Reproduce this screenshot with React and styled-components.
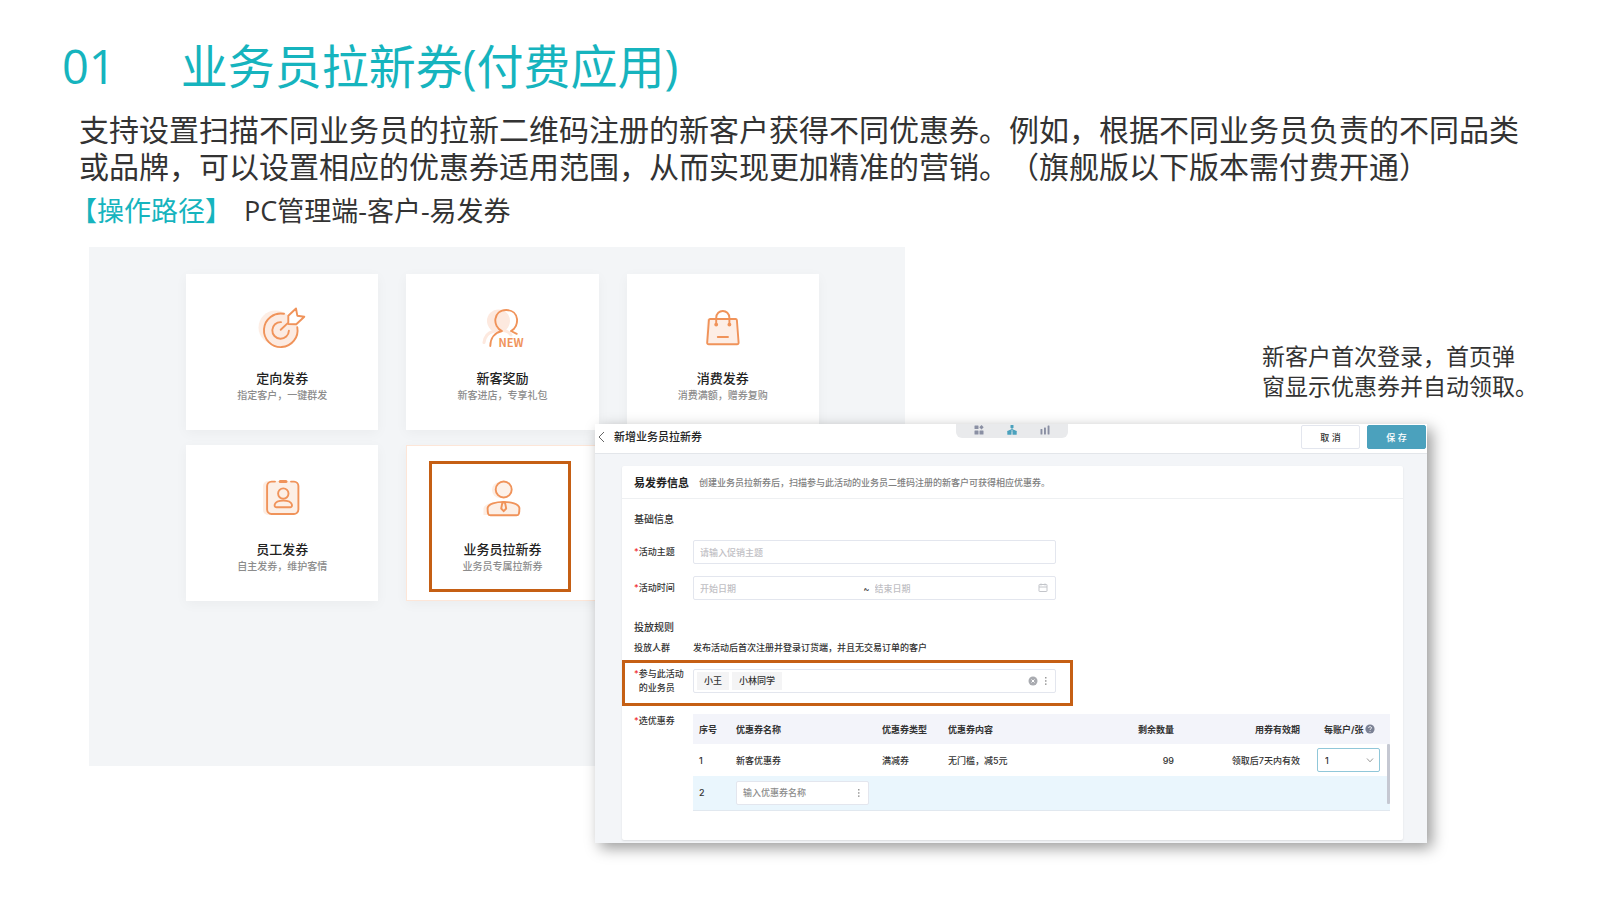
import React, { useState } from 'react';
import styled, { createGlobalStyle, css } from 'styled-components';

const GlobalStyle = createGlobalStyle`
    *{
        box-sizing: border-box;
    }
    body{
        margin: 0;
        background: #fff;
        color: #333;
        font-family: "Open Sans", "Noto Sans CJK SC", sans-serif;
        text-spacing-trim: space-all;
    }
    h1, h2, h3, p{
        margin: 0;
        font-weight: normal;
    }
    button, input, select{
        font-family: inherit;
        font-weight: inherit;
    }
`

const Page=styled.main`
    padding-top: 38px;
    padding-bottom: 40px;
`

const Heading=styled.h1`
    display: flex;
    gap: 65px;
    padding-left: 62px;
    font-size: 47px;
    line-height: 56px;
    color: #16b4be;
`

const Intro=styled.p`
    margin-top: 17px;
    padding-left: 79px;
    font-size: 30px;
    line-height: 37px;
    white-space: nowrap;
`

const PathLine=styled.p`
    margin-top: 8px;
    padding-left: 70px;
    font-size: 27px;
    line-height: 36px;
    display: flex;
    gap: 12px;
    strong{
        font-weight: normal;
        color: #16b4be;
    }
`

/* the form window shares the middle cell with the menu panel and lies over it */
const Stage=styled.div`
    display: grid;
    grid-template-columns: 506fr 310fr 357fr 165fr 173fr;
    grid-template-rows: 177px 342px auto;
    margin-top: 18px;
    margin-left: 89px;
`

const MenuPanel=styled.section`
    grid-column: 1 / 3;
    grid-row: 1 / 3;
    display: grid;
    grid-template-columns: repeat(3, 1fr);
    align-content: start;
    gap: 15px 28px;
    padding: 27px 86px 0 97px;
    background: #f3f5f7;
`

const MenuCard=styled.article`
    position: relative;
    height: 156px;
    padding-top: 29px;
    display: flex;
    flex-direction: column;
    align-items: center;
    background: #fff;
    border: 1px solid ${({ $active }) => ($active ? '#fde6d8' : '#fff')};
    box-shadow: 0 3px 12px rgba(0, 0, 0, .04);
    h2{
        margin-top: 17px;
        font-size: 13px;
        line-height: 18px;
        font-weight: 500;
        color: #222;
    }
    p{
        font-size: 10px;
        line-height: 17px;
        font-weight: 500;
        color: #8c8c8c;
    }
`

const Marker=styled.div`
    position: absolute;
    border: 3px solid #c55f14;
    pointer-events: none;
`

const CardMarker=styled(Marker)`
    inset: 15px 27px 8px 22px;
`

const FieldMarker=styled(Marker)`
    inset: -7px -17px -11px -12px;
`

const Note=styled.p`
    grid-column: 4 / 6;
    grid-row: 1;
    align-self: end;
    padding-bottom: 23px;
    font-size: 23px;
    line-height: 30px;
    white-space: nowrap;
`

const Window=styled.section`
    grid-column: 2 / 5;
    grid-row: 2 / 4;
    z-index: 1;
    background: #f3f5f8;
    box-shadow: 5px 5px 14px rgba(0, 0, 0, .4);
    font-family: Inter, "Noto Sans CJK SC", sans-serif;
    font-size: 9px;
    font-weight: 500;
    padding-bottom: 3px;
`

const TopBar=styled.header`
    display: grid;
    grid-template-columns: 1fr auto 1fr;
    height: 30px;
    padding: 0 1px 0 3px;
    background: #fff;
    border-bottom: 1px solid #e3e6ea;
`

const TopLeft=styled.div`
    display: flex;
    align-items: center;
    gap: 9px;
    padding-bottom: 3px;
    h2{
        font-size: 11px;
        line-height: 16px;
        font-weight: 500;
        color: #222;
    }
`

const IconButton=styled.button`
    display: flex;
    padding: 0;
    border: 0;
    background: none;
    color: ${({ $color }) => $color || '#8a8fa3'};
`

const ViewTabs=styled.nav`
    display: flex;
    align-items: center;
    justify-content: space-between;
    width: 112px;
    height: 14px;
    padding: 0 18px 2px;
    border-radius: 0 0 6px 6px;
    background: #e9eaec;
`

const TopActions=styled.div`
    display: flex;
    justify-content: flex-end;
    gap: 7px;
    padding-top: 1px;
`

const Button=styled.button`
    width: 59px;
    height: 24px;
    padding: 0;
    border-radius: 2px;
    font-size: 9px;
    ${({ $primary }) => $primary ? css`
        border: 1px solid #4ba1bd;
        background: #4ba1bd;
        color: #fff;
    ` : css`
        border: 1px solid #e3e6ee;
        background: #fff;
        color: #333;
    `}
`

const Sheet=styled.div`
    margin: 12px 24px 0 27px;
    padding-bottom: 29px;
    background: #fff;
    border-radius: 2px;
    box-shadow: 0 1px 2px rgba(0, 0, 0, .1);
`

const SheetHead=styled.div`
    display: flex;
    align-items: center;
    gap: 10px;
    height: 33px;
    padding-left: 12px;
    border-bottom: 1px solid #eef0f2;
    h3{
        font-size: 11px;
        font-weight: 700;
        color: #222;
    }
    p{
        font-weight: 500;
        color: #808080;
    }
`

const Form=styled.form`
    padding: 0 13px 0 12px;
    color: #333;
`

const SectionTitle=styled.h3`
    padding-top: ${({ $top }) => $top}px;
    font-size: 10px;
    line-height: 16px;
    font-weight: 500;
`

const Row=styled.div`
    position: relative;
    display: grid;
    grid-template-columns: 59px 1fr;
    align-items: ${({ $wide }) => ($wide ? 'start' : 'center')};
    max-width: ${({ $wide }) => ($wide ? 'none' : '422px')};
    margin-top: ${({ $top }) => $top}px;
`

const Label=styled.label`
    display: flex;
    line-height: 14px;
    white-space: nowrap;
    &::before{
        content: "${({ $required }) => ($required ? '*' : '')}";
        color: #f02d2d;
    }
`

const Box=styled.div`
    display: flex;
    align-items: center;
    height: 24px;
    padding: 0 7px 0 6px;
    border: 1px solid #e3e6ee;
    border-radius: 2px;
    background: #fff;
`

const TextInput=styled.input`
    flex: 1;
    min-width: 0;
    padding: 0;
    border: 0;
    outline: 0;
    background: none;
    font-size: 9px;
    color: #333;
    &::placeholder{
        color: ${({ $dark }) => ($dark ? '#8c8c8c' : '#bfc0c4')};
        opacity: 1;
    }
`

const Tilde=styled.span`
    width: 11px;
`

const TagBox=styled(Box)`
    gap: 3px;
    padding: 0 7px 0 3px;
`

const Tag=styled.span`
    padding: 0 7px;
    line-height: 18px;
    background: #f4f4f5;
`

const BoxTools=styled.div`
    display: flex;
    align-items: center;
    gap: 6px;
`

const TableWrap=styled.div`
    position: relative;
`

const Table=styled.table`
    width: 100%;
    table-layout: fixed;
    border-collapse: collapse;
    th, td{
        padding: 0;
        text-align: left;
        white-space: nowrap;
    }
    th{
        height: 30px;
        background: #f3f4fa;
        font-weight: 700;
        color: #333;
    }
    td{
        height: 32px;
    }
    tr > :first-child{
        padding-left: 6px;
    }
    tr > :nth-child(5), tr > :nth-child(6){
        text-align: right;
    }
    th:last-child{
        padding-left: 24px;
    }
    td:last-child{
        padding-left: 17px;
    }
`

const EmptyRow=styled.tr`
    background: #eaf6fd;
    border-bottom: 1px solid #e1e8ef;
    td{
        height: 34px;
    }
`

const NameBox=styled(Box)`
    width: 133px;
`

const QuotaHead=styled.span`
    display: flex;
    align-items: center;
    gap: 1px;
`

const SelectWrap=styled.div`
    position: relative;
    width: 63px;
    svg{
        position: absolute;
        right: 6px;
        top: 8px;
        pointer-events: none;
    }
`

const Select=styled.select`
    display: block;
    width: 100%;
    height: 24px;
    padding: 0 7px;
    appearance: none;
    border: 1px solid #90c7d9;
    border-radius: 2px;
    background: #fff;
    font-size: 9px;
    color: #333;
`

const ScrollThumb=styled.div`
    position: absolute;
    right: 0;
    top: 30px;
    bottom: 7px;
    width: 3px;
    border-radius: 1px;
    background: #c5c8d2;
`

const Art = ({ children }) => (
    <svg width="48" height="48" viewBox="0 0 48 48" fill="none" stroke="#f0935a" strokeWidth="1.9" strokeLinecap="round" strokeLinejoin="round" aria-hidden="true">
        {children}
    </svg>
);

const TargetArt = () => (
    <Art>
        <circle cx="17.5" cy="23.5" r="17" fill="#fdeee5" stroke="none" />
        <circle cx="22.7" cy="26.3" r="16.8" fill="#fcebe2" stroke="none" />
        <path d="M39.3 23.3A16.8 16.8 0 1 1 26 9.8" />
        <path d="M30.9 26.7A8.3 8.3 0 1 1 23 18.1" />
        <path d="M22.7 25.8L30.3 18.6V11.7L38 4.5L39.3 11.7L46.3 12.7L38.3 20.3L30.6 20" fill="#fff" />
    </Art>
);

const NewCustomerArt = () => (
    <Art>
        <circle cx="20.5" cy="17" r="11.5" fill="#fde9df" stroke="none" />
        <path d="M6 38.500C7 32 10.500 28.500 15 27.500C22 25 30 26 33 31" stroke="#fde9df" strokeWidth="3" />
        <path d="M12.300 42C12.300 34 17 28.500 24 27C14 22.500 15 6 28.300 6C41.500 6 42 22.500 33 27L38.700 29.800" />
        <text x="20.500" y="43" fill="#f0935a" stroke="none" fontFamily="Noto Sans CJK SC, sans-serif" fontSize="11" fontWeight="700">NEW</text>
    </Art>
);

const BagArt = () => (
    <Art>
        <path d="M8 15H34L35 40H7Z" fill="#fdf0e8" stroke="none" />
        <path d="M11.2 15H36.6C37.3 15 37.8 15.5 37.9 16.2L39.6 38.6C39.7 39.6 39 40.3 38.1 40.3H9.7C8.8 40.3 8.1 39.6 8.2 38.6L9.9 16.2C10 15.5 10.5 15 11.2 15Z" fill="#fdeee6" />
        <path d="M17.2 20.5V14C17.2 4.6 30.4 4.6 30.4 14V20.5" />
        <circle cx="17.2" cy="20.6" r="1" fill="#f0935a" />
        <circle cx="30.4" cy="20.6" r="1" fill="#f0935a" />
        <path d="M18.8 33H29" />
    </Art>
);

const BadgeArt = () => (
    <Art>
        <rect x="5" y="6" width="30" height="34" rx="5" fill="#fdeee4" stroke="none" />
        <path d="M17 6.600H13.500A4.500 4.500 0 0 0 9.100 11V34.600A4.500 4.500 0 0 0 13.500 39H35.500A4.500 4.500 0 0 0 40.400 34.600V11A4.500 4.500 0 0 0 36 6.600H33" fill="#fcefe6" />
        <path d="M22.200 6.400H28" strokeWidth="3" />
        <circle cx="25.300" cy="18.600" r="5.200" />
        <path d="M16.800 29.200C18.400 24.400 32.200 24.400 33.800 29.200C34.300 31 33.800 32.200 32.300 32.200H18.300C16.800 32.200 16.300 31 16.800 29.200Z" />
    </Art>
);

const SalesArt = () => (
    <Art>
        <circle cx="22" cy="15" r="8" fill="#fdeee4" stroke="none" />
        <path d="M5.500 40V33C8 25 34 25 36 33V40Z" fill="#fdeee4" stroke="none" />
        <circle cx="25.700" cy="14.500" r="8" fill="#fdf1e9" />
        <path d="M9.600 33C11 24.800 40 24.800 41.400 33C41.400 38.500 41 40.300 38.500 40.300H12.500C10 40.300 9.600 38.500 9.600 33Z" fill="#fcefe6" />
        <path d="M24.400 27.500H27L28.200 33.500L25.700 36.200L23.200 33.500Z" />
    </Art>
);

const BackIcon = () => (
    <svg width="7" height="12" viewBox="0 0 7 12" fill="none" stroke="#666" strokeWidth="1">
        <path d="M6 1L1 6L6 11" />
    </svg>
);

const GridIcon = () => (
    <svg width="10" height="10" viewBox="0 0 10 10" fill="currentColor">
        <rect x="0.500" y="0.500" width="4" height="3.500" rx=".5" />
        <path d="M7.500 0L9.700 2.200L7.500 4.400L5.300 2.200Z" />
        <rect x="0.500" y="5.500" width="4" height="4" rx=".5" />
        <rect x="5.500" y="5.500" width="4" height="4" rx=".5" />
    </svg>
);

const TreeIcon = () => (
    <svg width="10" height="10" viewBox="0 0 10 10" fill="currentColor">
        <rect x="3.500" y="0" width="3" height="3" rx=".5" />
        <path d="M4.500 3H5.500V4.200L8.500 5.500V7H7.500L5 5.200L2.500 7H1.500V5.500L4.500 4.200Z" />
        <rect x="0.300" y="5.700" width="4.200" height="4" rx=".5" />
        <rect x="5.500" y="5.700" width="4.200" height="4" rx=".5" />
    </svg>
);

const ChartIcon = () => (
    <svg width="10" height="10" viewBox="0 0 10 10" fill="currentColor">
        <rect x="0.500" y="4" width="1.900" height="5.500" rx=".5" />
        <rect x="4" y="2.500" width="1.900" height="7" rx=".5" />
        <rect x="7.600" y="0.500" width="1.900" height="9" rx=".5" />
    </svg>
);

const CalendarIcon = () => (
    <svg width="10" height="10" viewBox="0 0 10 10" fill="none" stroke="#c3c5ca" strokeWidth="1">
        <rect x="1" y="1.500" width="8" height="7" rx=".5" />
        <path d="M1 4H9M3 .5V2.500M7 .5V2.500" />
    </svg>
);

const ClearIcon = () => (
    <svg width="10" height="10" viewBox="0 0 10 10">
        <circle cx="5" cy="5" r="4.500" fill="#a9abb0" />
        <path d="M3.500 3.500L6.500 6.500M6.500 3.500L3.500 6.500" stroke="#fff" strokeWidth="1" />
    </svg>
);

const DotsIcon = () => (
    <svg width="4" height="10" viewBox="0 0 4 10" fill="#999">
        <rect x="1" y="1" width="1.500" height="1.500" />
        <rect x="1" y="4.200" width="1.500" height="1.500" />
        <rect x="1" y="7.400" width="1.500" height="1.500" />
    </svg>
);

const HelpIcon = () => (
    <svg width="10" height="10" viewBox="0 0 10 10" fill="none">
        <circle cx="5" cy="5" r="4.600" fill="#7b8194" />
        <path d="M3.600 4C3.600 2.200 6.500 2.200 6.500 3.900C6.500 4.900 5 4.900 5 6M5 7V7.800" stroke="#fff" strokeWidth=".9" />
    </svg>
);

const ChevronIcon = () => (
    <svg width="8" height="8" viewBox="0 0 8 8" fill="none" stroke="#999" strokeWidth="1">
        <path d="M1 2.500L4 5.800L7 2.500" />
    </svg>
);

const menuItems = [
    { title: '定向发券', text: '指定客户，一键群发', Icon: TargetArt },
    { title: '新客奖励', text: '新客进店，专享礼包', Icon: NewCustomerArt },
    { title: '消费发券', text: '消费满额，赠券复购', Icon: BagArt },
    { title: '员工发券', text: '自主发券，维护客情', Icon: BadgeArt },
    { title: '业务员拉新券', text: '业务员专属拉新券', Icon: SalesArt, active: true },
];

const CouponTable = () => {
    const [quota, setQuota] = useState('1');

    return (
        <TableWrap>
            <Table>
                <colgroup>
                    <col width="43" />
                    <col width="146" />
                    <col width="66" />
                    <col />
                    <col width="78" />
                    <col width="126" />
                    <col width="90" />
                </colgroup>
                <thead>
                    <tr>
                        <th>序号</th>
                        <th>优惠券名称</th>
                        <th>优惠券类型</th>
                        <th>优惠券内容</th>
                        <th>剩余数量</th>
                        <th>用券有效期</th>
                        <th><QuotaHead>每账户/张<HelpIcon /></QuotaHead></th>
                    </tr>
                </thead>
                <tbody>
                    <tr>
                        <td>1</td>
                        <td>新客优惠券</td>
                        <td>满减券</td>
                        <td>无门槛，减5元</td>
                        <td>99</td>
                        <td>领取后7天内有效</td>
                        <td>
                            <SelectWrap>
                                <Select aria-label="每账户/张" value={quota} onChange={(e) => setQuota(e.target.value)}>
                                    <option>1</option>
                                    <option>2</option>
                                    <option>3</option>
                                </Select>
                                <ChevronIcon />
                            </SelectWrap>
                        </td>
                    </tr>
                    <EmptyRow>
                        <td>2</td>
                        <td>
                            <NameBox>
                                <TextInput $dark aria-label="优惠券名称" placeholder="输入优惠券名称" />
                                <DotsIcon />
                            </NameBox>
                        </td>
                        <td></td>
                        <td></td>
                        <td></td>
                        <td></td>
                        <td></td>
                    </EmptyRow>
                </tbody>
            </Table>
            <ScrollThumb />
        </TableWrap>
    );
};

const CouponWindow = () => {
    const [members, setMembers] = useState(['小王', '小林同学']);

    return (
        <Window>
            <TopBar>
                <TopLeft>
                    <IconButton aria-label="返回"><BackIcon /></IconButton>
                    <h2>新增业务员拉新券</h2>
                </TopLeft>
                <ViewTabs>
                    <IconButton aria-label="应用"><GridIcon /></IconButton>
                    <IconButton aria-label="组织" $color="#4ba1bd"><TreeIcon /></IconButton>
                    <IconButton aria-label="统计"><ChartIcon /></IconButton>
                </ViewTabs>
                <TopActions>
                    <Button>取 消</Button>
                    <Button $primary>保 存</Button>
                </TopActions>
            </TopBar>
            <Sheet>
                <SheetHead>
                    <h3>易发券信息</h3>
                    <p>创建业务员拉新券后，扫描参与此活动的业务员二维码注册的新客户可获得相应优惠券。</p>
                </SheetHead>
                <Form onSubmit={(e) => e.preventDefault()}>
                    <SectionTitle $top={12}>基础信息</SectionTitle>
                    <Row $top={13}>
                        <Label $required htmlFor="topic">活动主题</Label>
                        <Box><TextInput id="topic" placeholder="请输入促销主题" /></Box>
                    </Row>
                    <Row $top={12}>
                        <Label $required htmlFor="start">活动时间</Label>
                        <Box>
                            <TextInput id="start" placeholder="开始日期" />
                            <Tilde>~</Tilde>
                            <TextInput aria-label="结束日期" placeholder="结束日期" />
                            <CalendarIcon />
                        </Box>
                    </Row>
                    <SectionTitle $top={19}>投放规则</SectionTitle>
                    <Row $wide $top={6}>
                        <Label as="span">投放人群</Label>
                        <span>发布活动后首次注册并登录订货端，并且无交易订单的客户</span>
                    </Row>
                    <Row $top={12}>
                        <Label $required htmlFor="members"><span>参与此活动<br />的业务员</span></Label>
                        <TagBox>
                            {members.map((name) => (
                                <Tag key={name}>{name}</Tag>
                            ))}
                            <TextInput id="members" />
                            <BoxTools>
                                <IconButton aria-label="清空" onClick={() => setMembers([])}><ClearIcon /></IconButton>
                                <DotsIcon />
                            </BoxTools>
                        </TagBox>
                        <FieldMarker />
                    </Row>
                    <Row $wide $top={19}>
                        <Label as="span" $required>选优惠券</Label>
                        <CouponTable />
                    </Row>
                </Form>
            </Sheet>
        </Window>
    );
};

const App = () => {
    return (
        <Page>
            <GlobalStyle />
            <Heading>
                <span>01</span>
                <span>业务员拉新券(付费应用)</span>
            </Heading>
            <Intro>
                支持设置扫描不同业务员的拉新二维码注册的新客户获得不同优惠券。例如，根据不同业务员负责的不同品类<br />
                或品牌，可以设置相应的优惠券适用范围，从而实现更加精准的营销。（旗舰版以下版本需付费开通）
            </Intro>
            <PathLine>
                <strong>【操作路径】</strong>
                <span>PC管理端-客户-易发券</span>
            </PathLine>
            <Stage>
                <MenuPanel>
                    {menuItems.map(({ title, text, Icon, active }) => (
                        <MenuCard key={title} $active={active}>
                            <Icon />
                            <h2>{title}</h2>
                            <p>{text}</p>
                            {active && <CardMarker />}
                        </MenuCard>
                    ))}
                </MenuPanel>
                <Note>
                    新客户首次登录，首页弹<br />
                    窗显示优惠券并自动领取。
                </Note>
                <CouponWindow />
            </Stage>
        </Page>
    );
};

export default App;
